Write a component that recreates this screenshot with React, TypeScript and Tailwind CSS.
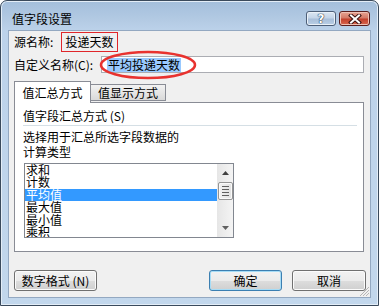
import React from "react";

const font = { fontFamily: '"Noto Sans CJK SC", "Liberation Sans", sans-serif' };

function WinButton({ children, def, className }: { children: React.ReactNode; def?: boolean; className: string }) {
  return (
    <div
      className={
        "h-[21px] rounded-[3px] border flex items-center justify-center text-[12px] text-black " +
        (def ? "border-[#3c7fb1] shadow-[inset_0_0_0_1px_#a6dcf6] " : "border-[#707070] shadow-[inset_0_0_0_1px_#fbfbfb] ") +
        "bg-[linear-gradient(to_bottom,#f2f2f2_0%,#ebebeb_50%,#dddddd_51%,#cfcfcf_100%)] " +
        className
      }
    >
      {children}
    </div>
  );
}

export default function App() {
  const items = ["求和", "计数", "平均值", "最大值", "最小值", "乘积"];
  return (
    <div className="w-[379px] h-[306px] bg-white" style={font}>
      <div className="w-[379px] h-[306px] rounded-t-[7px] border border-[#3a4a5c] bg-[linear-gradient(to_bottom,#a3bedb_0px,#b4cbe4_20px,#bcd2ea_30px,#c2d7ec_100%)] flex flex-col shadow-[inset_0_0_0_1px_#e3edf7]">
        {/* title bar */}
        <div className="h-[29px] flex items-start shrink-0">
          <div className="ml-[11px] mt-[10px] text-[12px] leading-[16px] text-black">值字段设置</div>
          <div className="ml-auto mr-[8px] mt-[10px] flex gap-[3px]">
            <div className="w-[30px] h-[15px] rounded-[3px] border border-[#4d5f78] bg-[linear-gradient(to_bottom,#dbe6f2_0%,#c4d5e8_45%,#a9bfd9_55%,#b9cfe6_100%)] flex items-center justify-center shadow-[inset_0_0_0_1px_#eaf1f8]">
              <span className="text-[12px] font-bold leading-none text-white" style={{ fontFamily: '"DejaVu Sans", sans-serif', textShadow: "0 0 1px #2a3a50, 0 0 1px #2a3a50, 0 0 1px #2a3a50" }}>?</span>
            </div>
            <div className="w-[31px] h-[15px] rounded-[3px] border border-[#5a1e1e] bg-[linear-gradient(to_bottom,#e8a493_0%,#d47a68_45%,#c3412d_55%,#d8664f_100%)] flex items-center justify-center shadow-[inset_0_0_0_1px_#eec0b4]">
              <svg width="14" height="10" viewBox="0 0 14 10">
                <path d="M3 1.5 L11 8.5 M11 1.5 L3 8.5" stroke="#3a1010" strokeWidth="4" strokeLinecap="square" />
                <path d="M3 1.5 L11 8.5 M11 1.5 L3 8.5" stroke="#ffffff" strokeWidth="2" strokeLinecap="square" />
              </svg>
            </div>
          </div>
        </div>
        {/* client */}
        <div className="relative mx-[7px] h-[268px] bg-[#f0f0f0] border border-[#93a8c1] px-[5px] flex flex-col text-[12px] text-black">
          {/* row 1 */}
          <div className="mt-[1px] h-[20px] flex items-center">
            <div className="w-[47px] leading-[14px]">源名称:</div>
            <div className="w-[57px] h-[20px] border-[1.5px] border-[#e0262a] flex items-center justify-center leading-[14px]">投递天数</div>
          </div>
          {/* row 2 */}
          <div className="mt-[4px] h-[17px] flex items-center">
            <div className="w-[87px] leading-[14px] whitespace-nowrap">自定义名称(C):</div>
            <div className="w-[263px] h-[17px] bg-white border border-[#abadb3] flex items-center pl-[5px]">
              <span className="bg-[#99c9ff] leading-[14px] h-[14px] px-[1px]">平均投递天数</span>
            </div>
          </div>
          {/* tabs */}
          <div className="mt-[8px] h-[21px] flex items-end relative z-10">
            <div className="w-[77px] h-[22px] -mb-[1px] bg-white border border-[#898c95] border-b-0 flex items-center justify-center leading-[14px]">值汇总方式</div>
            <div className="w-[75px] h-[17px] mb-[1px] border border-l-0 border-[#898c95] bg-[linear-gradient(to_bottom,#f2f2f2,#d9d9d9)] flex items-center justify-center leading-[14px]">值显示方式</div>
          </div>
          {/* panel */}
          <div className="w-[350px] h-[150px] bg-white border border-[#898c95] flex flex-col pl-[8px]">
            <div className="mt-[6px] leading-[14px]">值字段汇总方式 (S)</div>
            <div className="mt-[2px] mr-[6px] h-[1px] bg-[#d5dfe5]"></div>
            <div className="mt-[3px] leading-[15px]">选择用于汇总所选字段数据的</div>
            <div className="leading-[15px]">计算类型</div>
            <div className="mt-[4px] ml-[1px] w-[210px] h-[75px] border border-[#828790] bg-white flex">
              <div className="w-[192px] flex flex-col overflow-hidden">
                {items.map((it, i) => (
                  <div
                    key={it}
                    className={"h-[12.4px] shrink-0 leading-[12.4px] pl-[1px] " + (i === 2 ? "bg-[#3399ff] text-white" : "")}
                  >
                    {it}
                  </div>
                ))}
              </div>
              <div className="w-[16px] bg-[linear-gradient(to_right,#e6e6e6,#f4f4f4)] flex flex-col items-center">
                <div className="h-[18px] w-full flex items-center justify-center">
                  <svg width="7" height="4" viewBox="0 0 7 4"><path d="M0 4 L3.5 0 L7 4 Z" fill="#404040" /></svg>
                </div>
                <div className="w-[15px] h-[18px] rounded-[2px] border border-[#959595] bg-[linear-gradient(to_right,#f2f2f2,#e2e2e2)] flex flex-col items-center justify-center gap-[2px] shadow-[inset_0_0_0_1px_#fafafa]">
                  <div className="w-[7px] h-[1px] bg-[#606060]"></div>
                  <div className="w-[7px] h-[1px] bg-[#606060]"></div>
                  <div className="w-[7px] h-[1px] bg-[#606060]"></div>
                  <div className="w-[7px] h-[1px] bg-[#606060]"></div>
                </div>
                <div className="mt-auto h-[18px] w-full flex items-center justify-center">
                  <svg width="7" height="4" viewBox="0 0 7 4"><path d="M0 0 L3.5 4 L7 0 Z" fill="#606060" /></svg>
                </div>
              </div>
            </div>
          </div>
          {/* buttons */}
          <div className="mt-[18px] flex items-center">
            <WinButton className="w-[83px]">数字格式 (N)</WinButton>
            <WinButton def className="ml-auto w-[73px]">确定</WinButton>
            <WinButton className="ml-[10px] mr-[-1px] w-[74px]">取消</WinButton>
          </div>
          {/* resize grip */}
          <svg className="absolute right-[0px] bottom-[0px]" width="10" height="10" viewBox="0 0 10 10">
            <path d="M9 3 L3 9 M9 6 L6 9 M9 0 L0 9" stroke="#b5b5b5" strokeWidth="1" />
          </svg>
          {/* red annotation ellipse */}
          <svg className="absolute left-[89px] top-[18px] pointer-events-none" width="100" height="32" viewBox="0 0 100 32">
            <ellipse cx="50" cy="16" rx="47" ry="13" fill="none" stroke="#e8322f" strokeWidth="2.5" />
          </svg>
        </div>
      </div>
    </div>
  );
}
